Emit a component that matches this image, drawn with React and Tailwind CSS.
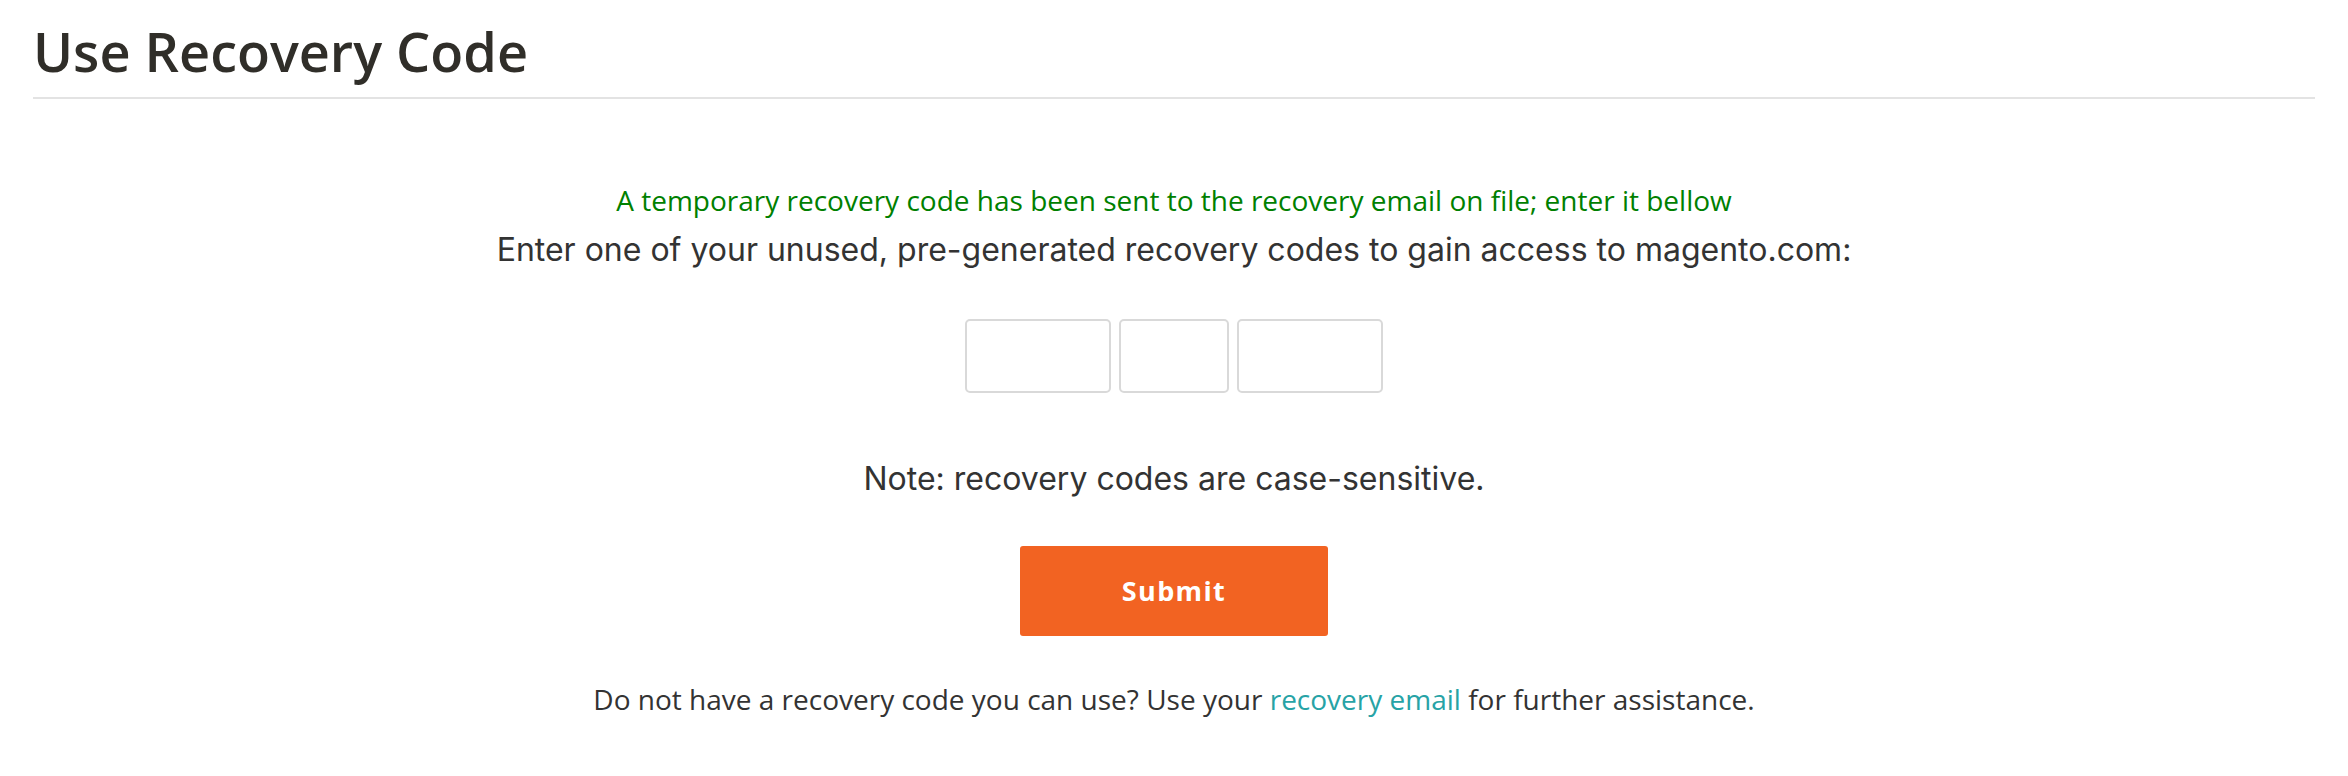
export default function App() {
  return (
    <div className="min-h-[776px] bg-white px-[33px] pt-[20px] font-['Open_Sans',sans-serif] text-[#333]">
      <h1 className="border-b-2 border-[#e3e3e3] pb-[14px] text-[54px] font-semibold leading-[63px] text-[#302e29]">
        Use Recovery Code
      </h1>

      <div className="flex flex-col items-center pt-[83px]">
        <p className="text-[28px] leading-[36px] text-[#008000]">
          A temporary recovery code has been sent to the recovery email on file; enter it bellow
        </p>
        <p className="mt-[10px] font-['Inter',sans-serif] text-[32px] leading-[44px] text-[#333]">
          Enter one of your unused, pre-generated recovery codes to gain access to magento.com:
        </p>

        <div className="mt-[47px] flex gap-[8px]">
          <input type="text" className="h-[74px] w-[146px] rounded-[5px] border-2 border-[#d9d9d9] bg-white outline-none" />
          <input type="text" className="h-[74px] w-[110px] rounded-[5px] border-2 border-[#d9d9d9] bg-white outline-none" />
          <input type="text" className="h-[74px] w-[146px] rounded-[5px] border-2 border-[#d9d9d9] bg-white outline-none" />
        </div>

        <p className="mt-[64px] font-['Inter',sans-serif] text-[32px] leading-[44px] text-[#333]">
          Note: recovery codes are case-sensitive.
        </p>

        <button
          type="button"
          className="mt-[45px] h-[90px] w-[308px] rounded-[3px] bg-[#f26322] text-[27px] font-bold tracking-[0.05em] text-white"
        >
          Submit
        </button>

        <p className="mt-[45px] text-[28px] leading-[36px] text-[#333]">
          Do not have a recovery code you can use? Use your{" "}
          <a href="#" className="text-[#27a3a6]">
            recovery email
          </a>{" "}
          for further assistance.
        </p>
      </div>
    </div>
  );
}
